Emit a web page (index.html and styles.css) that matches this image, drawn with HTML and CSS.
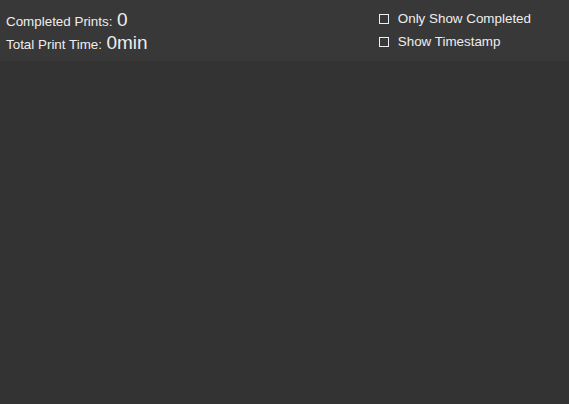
FILE: index.html
```html
<!DOCTYPE html>
<html>
<head>
<meta charset="utf-8">
<link rel="stylesheet" href="styles.css">
</head>
<body>
<div class="header">
  <div class="stats">
    <div class="stat"><span class="label">Completed Prints:</span> <span class="value">0</span></div>
    <div class="stat"><span class="label">Total Print Time:</span> <span class="value">0min</span></div>
  </div>
  <div class="options">
    <label class="opt"><span class="box"></span><span>Only Show Completed</span></label>
    <label class="opt"><span class="box"></span><span>Show Timestamp</span></label>
  </div>
</div>
</body>
</html>
```
FILE: styles.css
```css
html, body {
  margin: 0;
  padding: 0;
  background: #333333;
  height: 100%;
}
body {
  font-family: "Liberation Sans", Arial, sans-serif;
  color: #eeeeee;
}
.header {
  background: #383838;
  height: 61px;
  display: flex;
  justify-content: space-between;
  box-sizing: border-box;
  padding: 8px 38px 0 6px;
}
.stats {
  display: flex;
  flex-direction: column;
}
.stat {
  height: 23px;
  line-height: 23px;
  white-space: nowrap;
}
.label {
  font-size: 13.4px;
}
.value {
  font-size: 19px;
}
.options {
  display: flex;
  flex-direction: column;
  margin-top: -1px;
}
.opt {
  display: flex;
  align-items: center;
  height: 23px;
  font-size: 13.4px;
  white-space: nowrap;
}
.box {
  width: 8px;
  height: 8px;
  border: 1px solid #eeeeee;
  margin: 0 9px 0 0;
}
```
